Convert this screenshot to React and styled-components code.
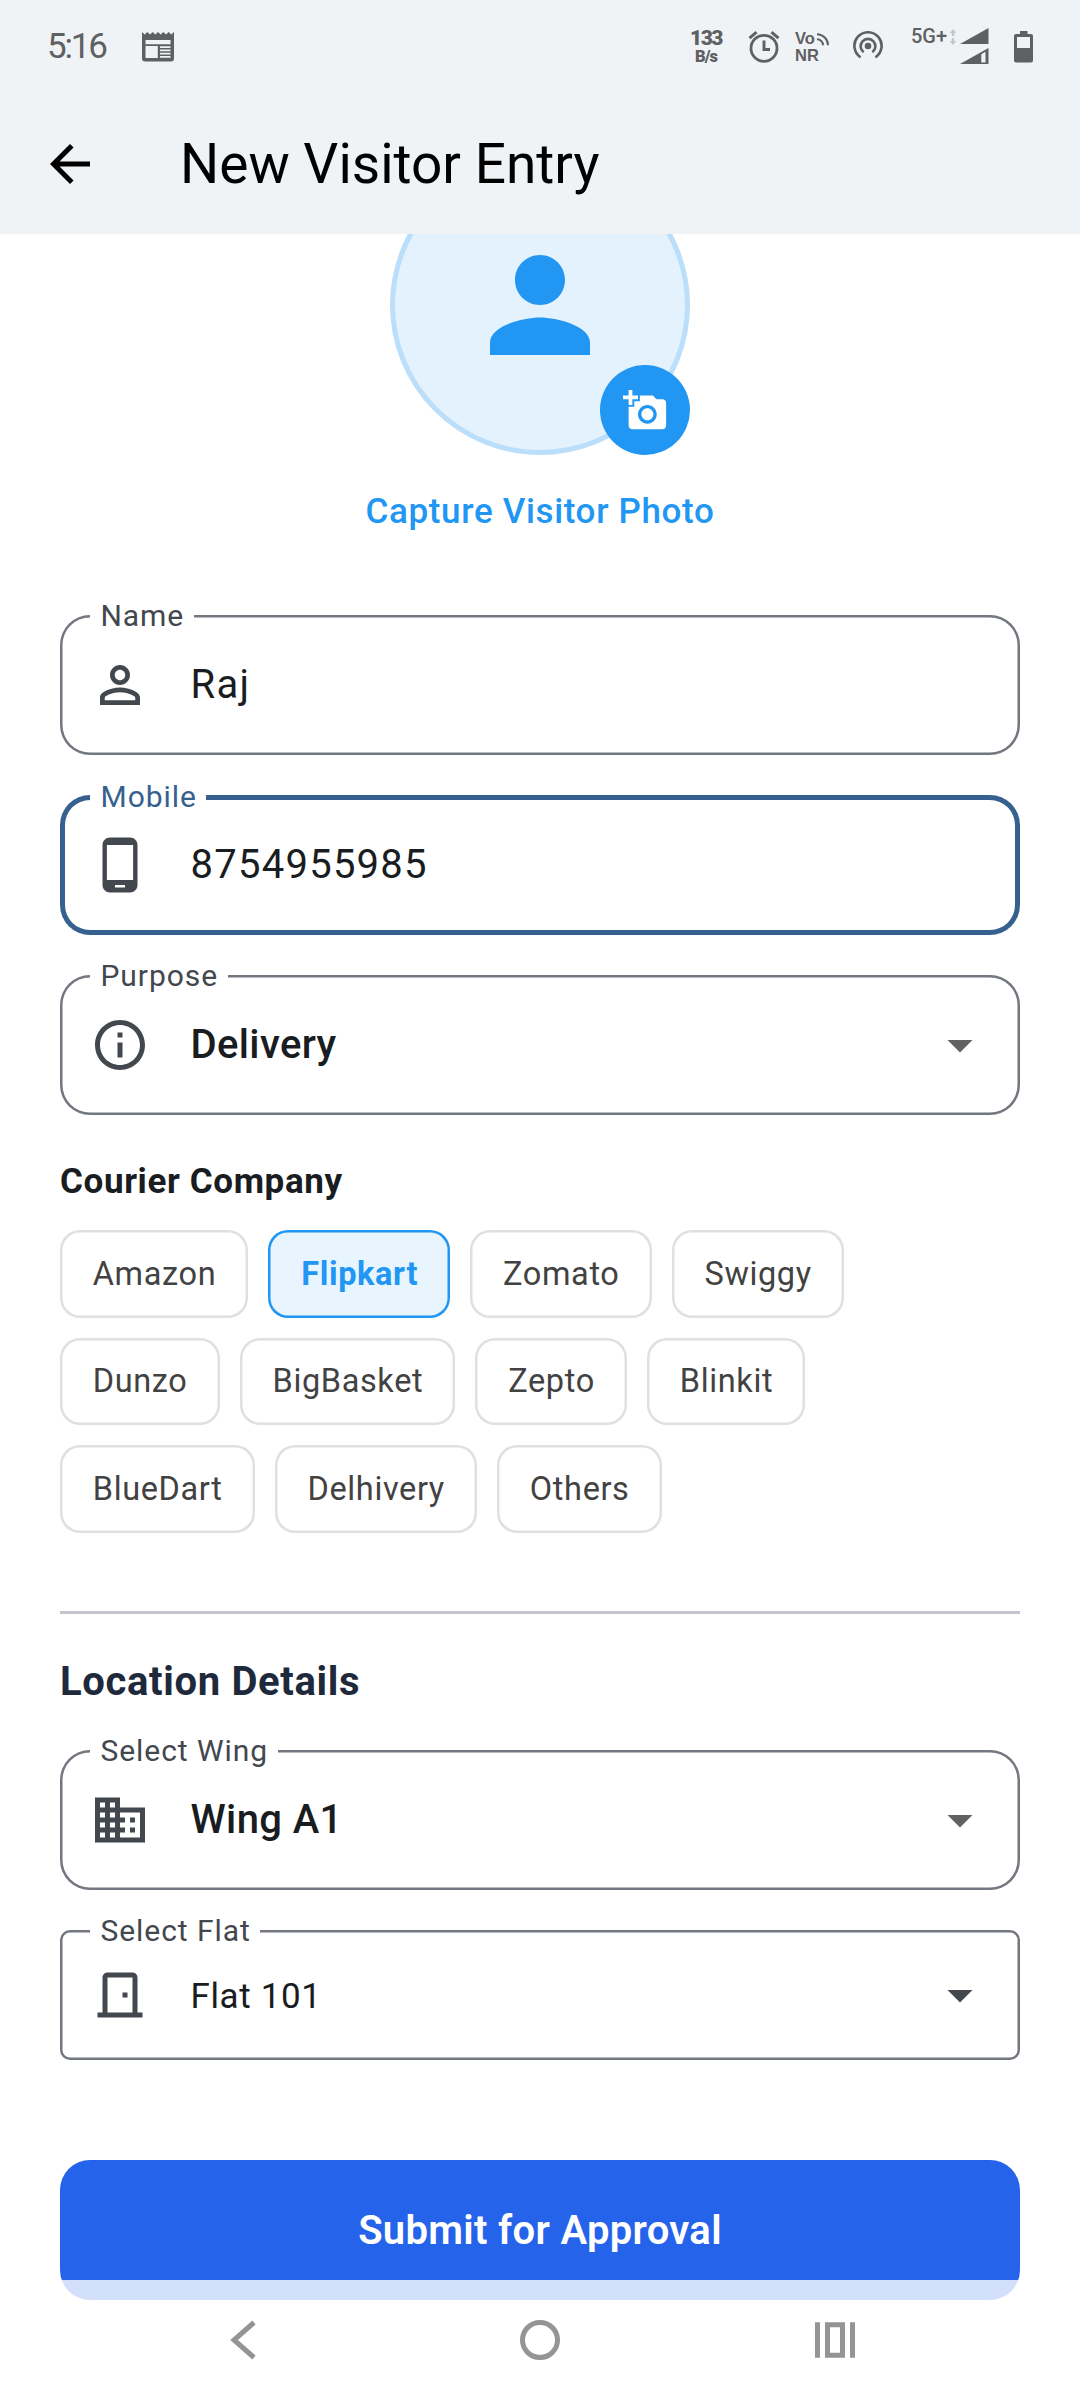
import React, { useState } from "react";
import styled, { createGlobalStyle } from "styled-components";

const companies = [
  "Amazon",
  "Flipkart",
  "Zomato",
  "Swiggy",
  "Dunzo",
  "BigBasket",
  "Zepto",
  "Blinkit",
  "BlueDart",
  "Delhivery",
  "Others",
];

const icons = {
  back: "M20 11H7.83l5.59-5.59L12 4l-8 8 8 8 1.41-1.41L7.83 13H20v-2z",
  person:
    "M12 12c2.21 0 4-1.79 4-4s-1.79-4-4-4-4 1.79-4 4 1.79 4 4 4zm0 2c-2.67 0-8 1.34-8 4v2h16v-2c0-2.66-5.33-4-8-4z",
  personOutline:
    "M12 5.9c1.16 0 2.1.94 2.1 2.1s-.94 2.1-2.1 2.1S9.9 9.16 9.9 8s.94-2.1 2.1-2.1m0 9c2.97 0 6.1 1.46 6.1 2.1v1.1H5.9V17c0-.64 3.13-2.1 6.1-2.1M12 4C9.79 4 8 5.79 8 8s1.79 4 4 4 4-1.79 4-4-1.79-4-4-4zm0 9c-2.67 0-8 1.34-8 4v3h16v-3c0-2.66-5.33-4-8-4z",
  addPhoto:
    "M3 4V1h2v3h3v2H5v3H3V6H0V4h3zm3 6V7h3V4h7l1.83 2H21c1.1 0 2 .9 2 2v12c0 1.1-.9 2-2 2H5c-1.1 0-2-.9-2-2V10h3zm7 9c2.76 0 5-2.24 5-5s-2.24-5-5-5-5 2.24-5 5 2.24 5 5 5zm-3.2-5c0 1.77 1.43 3.2 3.2 3.2s3.2-1.43 3.2-3.2-1.43-3.2-3.2-3.2-3.2 1.43-3.2 3.2z",
  phone:
    "M16 1H8C6.34 1 5 2.34 5 4v16c0 1.66 1.34 3 3 3h8c1.66 0 3-1.34 3-3V4c0-1.66-1.34-3-3-3zm-2 20h-4v-1h4v1zm3.25-3H6.75V4h10.5v14z",
  info: "M11 7h2v2h-2zm0 4h2v6h-2zm1-9C6.48 2 2 6.48 2 12s4.48 10 10 10 10-4.48 10-10S17.52 2 12 2zm0 18c-4.41 0-8-3.59-8-8s3.59-8 8-8 8 3.59 8 8-3.59 8-8 8z",
  business:
    "M12 7V3H2v18h20V7H12zM6 19H4v-2h2v2zm0-4H4v-2h2v2zm0-4H4V9h2v2zm0-4H4V5h2v2zm4 12H8v-2h2v2zm0-4H8v-2h2v2zm0-4H8V9h2v2zm0-4H8V5h2v2zm10 12h-8v-2h2v-2h-2v-2h2v-2h-2V9h8v10zm-2-8h-2v2h2v-2zm0 4h-2v2h2v-2z",
  door: "M19 19V5c0-1.1-.9-2-2-2H7c-1.1 0-2 .9-2 2v14H3v2h18v-2h-2zm-2 0H7V5h10v14zm-4-8h2v2h-2v-2z",
  dropDown: "M7 10l5 5 5-5z",
};

const Icon = ({ name, size = 60, color }) => (
  <IconSvg width={size} height={size} viewBox="0 0 24 24" $color={color}>
    <path d={icons[name]} />
  </IconSvg>
);

const Field = ({ label, icon, value, focused, dropdown, strong, compact }) => (
  <FieldBox $focused={focused} $compact={compact}>
    <FieldLabel $focused={focused}>{label}</FieldLabel>
    <Icon name={icon} />
    <FieldValue $strong={strong} $compact={compact}>
      {value}
    </FieldValue>
    {dropdown && <Icon name="dropDown" color={strong && "#616161"} />}
  </FieldBox>
);

const StatusIcons = () => (
  <StatusRight>
    <NetSpeed>
      <span>133</span>
      <small>B/s</small>
    </NetSpeed>
    <AlarmIcon width="32" height="32" viewBox="0 0 32 32">
      <g fill="none" stroke="currentColor">
        <circle cx="16" cy="17.3" r="13" strokeWidth="2.8" />
        <path d="M16 9.5v9h6" strokeWidth="2.9" />
        <path d="M1.5 7.2l7-6M30.5 7.2l-7-6" strokeWidth="2.9" />
      </g>
    </AlarmIcon>
    <VoNr>
      <span>Vo</span>
      <span>NR</span>
      <VoWaves width="13" height="13" viewBox="0 0 13 13">
        <g fill="none" stroke="currentColor" strokeWidth="2">
          <path d="M1 1.2a11 11 0 0 1 11 11" />
          <path d="M1 6.3a6 6 0 0 1 6 6" />
        </g>
      </VoWaves>
    </VoNr>
    <HotspotIcon width="30" height="30" viewBox="0 0 30 30">
      <circle cx="15" cy="15" r="3.3" fill="currentColor" />
      <g fill="none" stroke="currentColor" strokeWidth="2.6">
        <path d="M10.6 21.2a7.4 7.4 0 1 1 8.8 0" />
        <path d="M7.6 26.3a13.6 13.6 0 1 1 14.8 0" />
      </g>
    </HotspotIcon>
    <NetworkType>5G+</NetworkType>
    <DataArrows width="6" height="16" viewBox="0 0 6 16">
      <path d="M3 0l3.2 4H4.2v3H1.8V4H-.2zM3 16l3.2-4H4.2V9H1.8v3H-.2z" />
    </DataArrows>
    <SignalIcon width="29" height="36" viewBox="0 0 29 36">
      <path d="M0 16L28.5 0v16z" />
      <path fillRule="evenodd" d="M0 36L28.5 20v16zM21.3 26.2v8.4h4.2V23.8z" />
    </SignalIcon>
    <BatteryIcon width="19" height="32" viewBox="0 0 19 32">
      <path
        fillRule="evenodd"
        d="M6 0h7.5v3H17q2 0 2 2v24.5q0 2-2 2H2q-2 0-2-2V5q0-2 2-2h4zM3 6v11h13V6z"
      />
    </BatteryIcon>
  </StatusRight>
);

export default function App() {
  const [company, setCompany] = useState("Flipkart");

  return (
    <Screen>
      <GlobalStyle />
      <Header>
        <StatusBar>
          <Clock>5:16</Clock>
          <svg width="32" height="30" viewBox="0 0 32 30">
            <path
              fill="currentColor"
              fillRule="evenodd"
              d="M0 0l2.7 2.5L5.3 0 8 2.5 10.7 0l2.6 2.5L16 0l2.7 2.5L21.3 0 24 2.5 26.7 0l2.6 2.5L32 0v26.5q0 3-3 3H3q-3 0-3-3zM3.5 8v4.3h25V8zM3.5 14v12h12.3V14zM18 14.3v1.8h10.5v-1.8zM18 17.6v1.6h10.5v-1.6zM18 20.8v1.6h10.5v-1.6zM18 24v1.8h10.5V24z"
            />
          </svg>
          <StatusIcons />
        </StatusBar>
        <AppBar>
          <Icon name="back" />
          <Title>New Visitor Entry</Title>
        </AppBar>
      </Header>

      <Content>
        <Photo>
          <Icon name="person" size={150} />
          <PhotoBadge>
            <Icon name="addPhoto" size={45} />
          </PhotoBadge>
        </Photo>
        <PhotoCaption>Capture Visitor Photo</PhotoCaption>

        <Fields>
          <Field label="Name" icon="personOutline" value="Raj" />
          <Field label="Mobile" icon="phone" value="8754955985" focused />
          <Field label="Purpose" icon="info" value="Delivery" strong dropdown />
        </Fields>

        <SubTitle>Courier Company</SubTitle>
        <Chips>
          {companies.map((name) => (
            <Chip
              key={name}
              $active={name === company}
              onClick={() => setCompany(name)}
            >
              {name}
            </Chip>
          ))}
        </Chips>

        <Divider />

        <SectionTitle>Location Details</SectionTitle>
        <Fields>
          <Field label="Select Wing" icon="business" value="Wing A1" strong dropdown />
          <Field label="Select Flat" icon="door" value="Flat 101" compact dropdown />
        </Fields>

        <SubmitButton>Submit for Approval</SubmitButton>
      </Content>

      <NavBar>
        <svg width="40" height="40" viewBox="0 0 40 40">
          <path d="M29 2.5L9 20l20 17.5" />
        </svg>
        <svg width="40" height="40" viewBox="0 0 40 40">
          <circle cx="20" cy="20" r="17.5" />
        </svg>
        <svg width="40" height="40" viewBox="0 0 40 40">
          <path d="M2.5 2.3v35.4M37.5 2.3v35.4M12.5 4.8h15v30.4h-15z" />
        </svg>
      </NavBar>
    </Screen>
  );
}

const GlobalStyle = createGlobalStyle`
  * {
    box-sizing: border-box;
  }
  body {
    margin: 0;
    background: #fff;
    font-family: Roboto, "Liberation Sans", sans-serif;
  }
`;

const Screen = styled.div`
  position: relative;
  display: flex;
  flex-direction: column;
  width: 1080px;
  height: 2400px;
  overflow: hidden;
  background: #fff;
`;

const IconSvg = styled.svg`
  flex: none;
  fill: ${(p) => p.$color || "currentColor"};
`;

const Header = styled.header`
  flex: none;
  height: 234px;
  background: #eff3f6;
`;

const StatusBar = styled.div`
  display: flex;
  align-items: center;
  height: 94px;
  padding: 0 47px;
  color: #5f6062;
`;

const Clock = styled.div`
  width: 95px;
  font-size: 35px;
  letter-spacing: -2.2px;
  line-height: 40px;
`;

const StatusRight = styled.div`
  display: flex;
  align-items: flex-start;
  height: 38px;
  margin-left: auto;
`;

const NetSpeed = styled.div`
  display: flex;
  flex-direction: column;
  align-items: center;
  width: 32px;
  margin: 0 26px 0 -1px;
  font-weight: 900;

  span {
    font-size: 21px;
    line-height: 20px;
    letter-spacing: -1.5px;
  }
  small {
    font-size: 16.5px;
    line-height: 18px;
    letter-spacing: -1px;
  }
`;

const AlarmIcon = styled.svg`
  margin: 3px 15px 0 0;
`;

const VoNr = styled.div`
  position: relative;
  display: flex;
  flex-direction: column;
  width: 34px;
  margin: 2px 24px 0 0;
  font-family: "Liberation Sans", sans-serif;
  font-size: 16.5px;
  font-weight: 700;
  line-height: 17px;
`;

const VoWaves = styled.svg`
  position: absolute;
  top: 3px;
  right: 0;
`;

const HotspotIcon = styled.svg`
  margin: 3px 28px 0 0;
`;

const NetworkType = styled.div`
  width: 39px;
  font-size: 20px;
  font-weight: 500;
  line-height: 17px;
`;

const DataArrows = styled.svg`
  margin: 1px 4px 0 0;
  fill: #c3c6c9;
`;

const SignalIcon = styled.svg`
  margin-right: 25px;
  fill: currentColor;
`;

const BatteryIcon = styled.svg`
  margin-top: 3px;
  fill: currentColor;
`;

const AppBar = styled.div`
  display: flex;
  align-items: center;
  gap: 80px;
  height: 140px;
  padding: 0 40px;
`;

const Title = styled.h1`
  margin: 0;
  font-size: 55px;
  font-weight: 400;
  line-height: 70px;
`;

const Content = styled.main`
  display: flex;
  flex: 1;
  flex-direction: column;
  min-height: 0;
  padding: 0 60px;
  overflow: hidden;
`;

/* scrolled partly under the app bar */
const Photo = styled.div`
  position: relative;
  display: flex;
  flex: none;
  align-items: center;
  align-self: center;
  justify-content: center;
  width: 300px;
  height: 300px;
  margin-top: -79px;
  border: 5px solid #bbdefb;
  border-radius: 50%;
  background: #e3f2fd;
  color: #2196f3;
`;

const PhotoBadge = styled.div`
  position: absolute;
  right: -5px;
  bottom: -5px;
  display: flex;
  align-items: center;
  justify-content: center;
  width: 90px;
  height: 90px;
  border-radius: 50%;
  background: #2196f3;
  color: #fff;
`;

const PhotoCaption = styled.div`
  margin: 32px 0 78px;
  color: #2196f3;
  font-size: 35px;
  font-weight: 500;
  letter-spacing: 0.65px;
  line-height: 50px;
  text-align: center;
`;

const Fields = styled.div`
  display: flex;
  flex-direction: column;
  gap: 40px;
`;

const FieldBox = styled.div`
  position: relative;
  display: flex;
  align-items: center;
  height: ${(p) => (p.$compact ? 130 : 140)}px;
  padding: 0 30px;
  border-radius: ${(p) => (p.$compact ? 10 : 30)}px;
  box-shadow: inset 0 0 0
    ${(p) => (p.$focused ? "5px #36618e" : "2.5px #73777f")};
  color: #43474e;
`;

const FieldLabel = styled.label`
  position: absolute;
  top: ${(p) => (p.$focused ? -18 : -19)}px;
  left: 30px;
  padding: 0 9.5px 0 10.5px;
  background: #fff;
  color: ${(p) => (p.$focused ? "#36618e" : "#43474e")};
  font-size: 30px;
  letter-spacing: 0.94px;
  line-height: 40px;
`;

const FieldValue = styled.div`
  flex: 1;
  margin-left: 40.5px;
  padding: ${(p) => (p.$compact ? "2px 0 0" : "0 0 2px")};
  color: #191c20;
  font-size: ${(p) => (p.$compact ? 35 : 40)}px;
  font-weight: ${(p) => (p.$strong ? 500 : 400)};
  letter-spacing: ${(p) => (p.$strong ? 0.375 : p.$compact ? 0.625 : 1.25)}px;
`;

const SubTitle = styled.h2`
  margin: 42px 0 23px;
  color: #191c20;
  font-size: 35px;
  font-weight: 700;
  letter-spacing: 0.625px;
  line-height: 50px;
`;

const Chips = styled.div`
  display: flex;
  flex-wrap: wrap;
  gap: 20px;
`;

const Chip = styled.button`
  height: 87.5px;
  padding: 0 32.2px 0 32.8px;
  border: 0;
  border-radius: 20px;
  background: ${(p) => (p.$active ? "#e9f5fe" : "#fff")};
  box-shadow: inset 0 0 0 2.5px ${(p) => (p.$active ? "#2196f3" : "#e0e0e0")};
  color: ${(p) => (p.$active ? "#2196f3" : "#424242")};
  font-family: inherit;
  font-size: 32.5px;
  font-weight: ${(p) => (p.$active ? 700 : 400)};
  letter-spacing: 0.625px;
`;

const Divider = styled.div`
  flex: none;
  height: 2.5px;
  margin: 78.75px 0 38.25px;
  background: #c3c6cf;
`;

const SectionTitle = styled.h2`
  margin: 0 0 38px;
  color: #1e293b;
  font-size: 40px;
  font-weight: 700;
  letter-spacing: 0.65px;
  line-height: 60px;
`;

const SubmitButton = styled.button`
  flex: none;
  height: 140px;
  margin-top: 100px;
  border: 0;
  border-radius: 30px;
  background: #2563eb;
  color: #fff;
  font-family: inherit;
  font-size: 40px;
  font-weight: 600;
  letter-spacing: 0.3px;
`;

/* translucent system bar laid over the page */
const NavBar = styled.nav`
  position: absolute;
  right: 0;
  bottom: 0;
  left: 0;
  display: flex;
  align-items: center;
  justify-content: space-between;
  height: 120px;
  padding: 0 225px;
  background: rgba(255, 255, 255, 0.8);

  svg {
    fill: none;
    stroke: #949494;
    stroke-width: 5;
  }
`;
